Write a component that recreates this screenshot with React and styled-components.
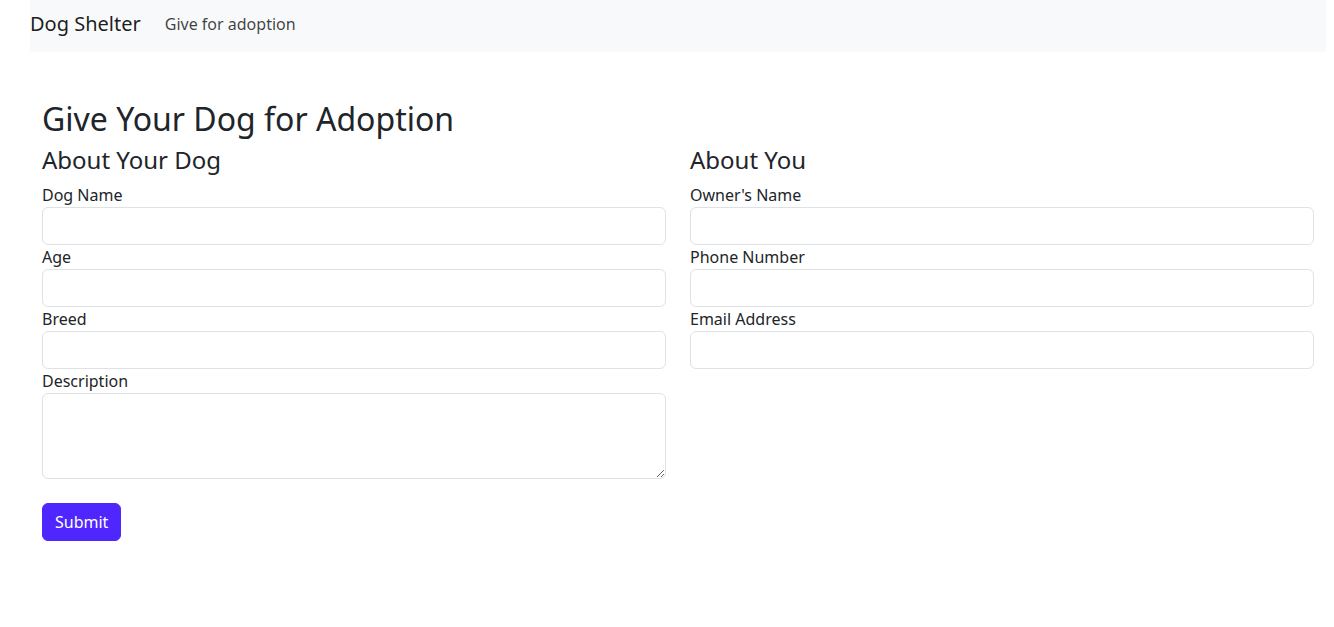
import React from 'react';
import styled, { createGlobalStyle } from 'styled-components';

const GlobalStyle = createGlobalStyle`
    * {
        box-sizing: border-box;
    }
    body {
        margin: 0;
        background: #fff;
        color: #212529;
        font-family: "Noto Sans", "Liberation Sans", sans-serif;
        font-size: 16px;
        line-height: 1.5;
    }
`;

const Page = styled.div`
    margin: 0 8px 0 30px;
`;

const NavBar = styled.nav`
    height: 52px;
    padding-bottom: 4px;
    display: flex;
    align-items: center;
    background-color: #f8f9fa;
`;

const Brand = styled.a`
    font-size: 20px;
    line-height: 30px;
    color: rgba(0, 0, 0, 0.9);
    text-decoration: none;
    margin-right: 16px;
`;

const NavLink = styled.a`
    padding: 8px;
    color: rgba(0, 0, 0, 0.75);
    text-decoration: none;
`;

const Main = styled.main`
    padding: 48px 12px 0;
`;

const Title = styled.h1`
    margin: 0 0 8px;
    font-size: 32px;
    font-weight: 400;
    line-height: 38.4px;
`;

const Grid = styled.div`
    display: grid;
    grid-template-columns: 1fr 1fr;
    column-gap: 24px;
`;

const Section = styled.div`
    display: flex;
    flex-direction: column;
`;

const SectionTitle = styled.h3`
    margin: 0 0 8px;
    font-size: 24px;
    font-weight: 400;
    line-height: 28.8px;
`;

const Label = styled.label`
    display: block;
    line-height: 24px;
`;

const Input = styled.input`
    display: block;
    width: 100%;
    height: 38px;
    padding: 6px 12px;
    font: inherit;
    border: 1px solid #dee2e6;
    border-radius: 6px;
    background: #fff;
`;

const TextArea = styled.textarea`
    display: block;
    width: 100%;
    height: 86px;
    padding: 6px 12px;
    font: inherit;
    border: 1px solid #dee2e6;
    border-radius: 6px;
    background: #fff;
`;

const Button = styled.button`
    align-self: flex-start;
    margin-top: 24px;
    padding: 6px 12px;
    font: inherit;
    line-height: 24px;
    color: #fff;
    background-color: #5026ff;
    border: 1px solid #5026ff;
    border-radius: 6px;
    cursor: pointer;
`;

const Field = ({ label, multiline }) => (
    <>
        <Label>{label}</Label>
        {multiline ? <TextArea rows={3} /> : <Input type="text" />}
    </>
);

export default function App() {
    return (
        <Page>
            <GlobalStyle />
            <NavBar>
                <Brand href="#">Dog Shelter</Brand>
                <NavLink href="#">Give for adoption</NavLink>
            </NavBar>
            <Main>
                <Title>Give Your Dog for Adoption</Title>
                <Grid>
                    <Section>
                        <SectionTitle>About Your Dog</SectionTitle>
                        <Field label="Dog Name" />
                        <Field label="Age" />
                        <Field label="Breed" />
                        <Field label="Description" multiline />
                        <Button type="button">Submit</Button>
                    </Section>
                    <Section>
                        <SectionTitle>About You</SectionTitle>
                        <Field label="Owner's Name" />
                        <Field label="Phone Number" />
                        <Field label="Email Address" />
                    </Section>
                </Grid>
            </Main>
        </Page>
    );
}
